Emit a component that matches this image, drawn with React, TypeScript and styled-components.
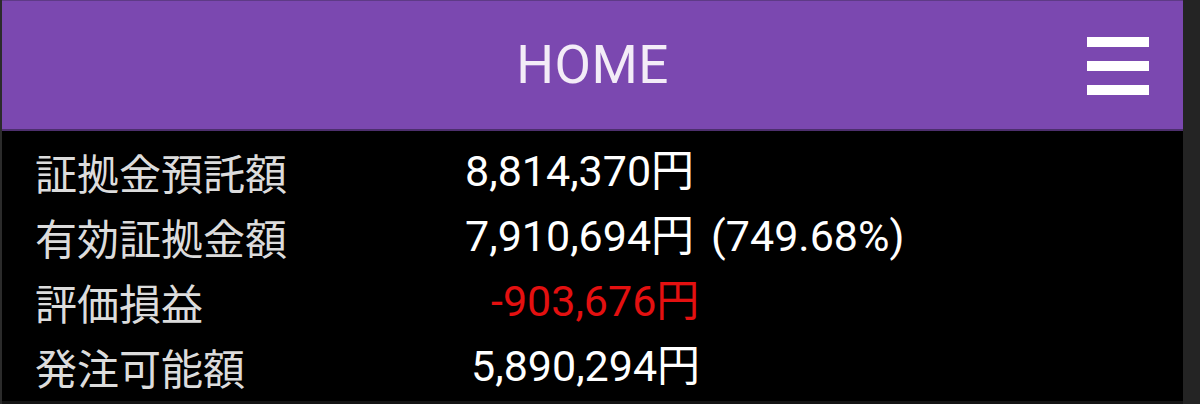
import React from "react";
import styled, {createGlobalStyle} from "styled-components";

const GlobalStyle = createGlobalStyle`
  html, body {
    margin: 0;
    padding: 0;
    background: #222222;
  }
  body {
    font-family: Roboto, "Noto Sans CJK JP", sans-serif;
  }
`;

const Page = styled.div`
  display: flex;
  width: 1200px;
  height: 404px;
  background: #222222;
  overflow: hidden;
`;

const Screen = styled.div`
  flex: 1;
  display: flex;
  flex-direction: column;
  border-left: 2px solid #2b2b2b;
  background: #000;
`;

const ScrollStrip = styled.div`
  width: 17px;
  background: #242424;
`;

const Header = styled.header`
  position: relative;
  height: 128px;
  display: flex;
  align-items: center;
  justify-content: center;
  background: #7b48b0;
  border-top: 1px solid #5e3a86;
  border-bottom: 2px solid #4d2f6e;
`;

const Title = styled.h1`
  margin: 0;
  font-family: Roboto, sans-serif;
  font-weight: 400;
  font-size: 53px;
  color: #f3ecf7;
  letter-spacing: 0.5px;
`;

const MenuButton = styled.button`
  position: absolute;
  right: 33px;
  top: 36px;
  width: 64px;
  height: 58px;
  padding: 0;
  border: 0;
  background: transparent;
  display: flex;
  flex-direction: column;
  justify-content: space-between;
  align-items: center;
  cursor: pointer;
`;

const MenuBar = styled.span`
  display: block;
  width: 62px;
  height: 10px;
  background: #ffffff;
`;

const Rows = styled.div`
  flex: 1;
  display: flex;
  flex-direction: column;
  padding-top: 8px;
  border-bottom: 3px solid #141414;
`;

const Row = styled.div`
  display: grid;
  grid-template-columns: 430px 1fr;
  align-items: center;
  height: 65px;
  padding-left: 33px;
`;

const Label = styled.span`
  font-family: "Noto Sans CJK JP", sans-serif;
  font-size: 42px;
  color: #dcdcdc;
  line-height: 1;
`;

const Value = styled.span<{ $indent: number; $negative?: boolean }>`
  font-family: Roboto, "Noto Sans CJK JP", sans-serif;
  font-size: 43px;
  line-height: 1;
  padding-left: ${p => p.$indent}px;
  color: ${p => (p.$negative ? "#e41010" : "#ffffff")};
  white-space: pre;
`;

const Ratio = styled.span`
  margin-left: 17px;
`;

const items: { label: string; value: string; ratio?: string; indent: number; negative?: boolean }[] = [
    {label: "証拠金預託額", value: "8,814,370円", indent: 0},
    {label: "有効証拠金額", value: "7,910,694円", ratio: "(749.68%)", indent: 0},
    {label: "評価損益", value: "-903,676円", indent: 26, negative: true},
    {label: "発注可能額", value: "5,890,294円", indent: 6},
];

export default function App() {
    return (
        <>
            <GlobalStyle/>
            <Page>
                <Screen>
                    <Header>
                        <Title>HOME</Title>
                        <MenuButton aria-label="menu">
                            <MenuBar/>
                            <MenuBar/>
                            <MenuBar/>
                        </MenuButton>
                    </Header>
                    <Rows>
                        {items.map(item => (
                            <Row key={item.label}>
                                <Label>{item.label}</Label>
                                <Value $indent={item.indent} $negative={item.negative}>
                                    {item.value}
                                    {item.ratio && <Ratio>{item.ratio}</Ratio>}
                                </Value>
                            </Row>
                        ))}
                    </Rows>
                </Screen>
                <ScrollStrip/>
            </Page>
        </>
    );
}
